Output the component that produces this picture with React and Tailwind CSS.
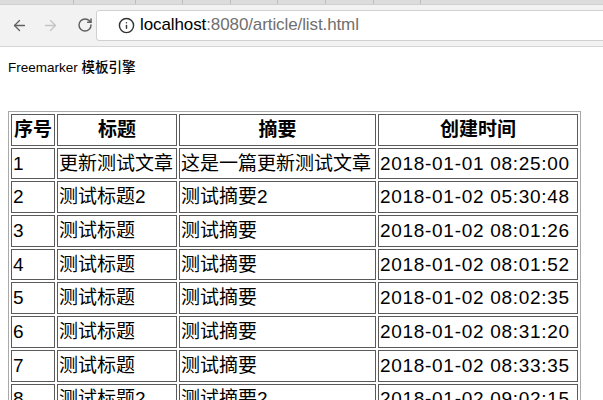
import React from 'react'
import { ArrowLeft, ArrowRight, RotateCw, Info } from 'lucide-react'

const rows = [
  ['1', '更新测试文章', '这是一篇更新测试文章', '2018-01-01 08:25:00'],
  ['2', '测试标题2', '测试摘要2', '2018-01-02 05:30:48'],
  ['3', '测试标题', '测试摘要', '2018-01-02 08:01:26'],
  ['4', '测试标题', '测试摘要', '2018-01-02 08:01:52'],
  ['5', '测试标题', '测试摘要', '2018-01-02 08:02:35'],
  ['6', '测试标题', '测试摘要', '2018-01-02 08:31:20'],
  ['7', '测试标题', '测试摘要', '2018-01-02 08:33:35'],
  ['8', '测试标题2', '测试摘要2', '2018-01-02 09:02:15'],
]

const font = { fontFamily: '"Liberation Sans", "Noto Sans CJK SC", sans-serif' }

function Toolbar() {
  return (
    <div className="h-[47px] bg-[#f2f2f2] border-b border-[#d6d6d6] relative">
      <div className="h-[5px] bg-[#dcdcdc] border-b border-[#cfcfcf] flex">
        <div className="w-[73px]" />
        {[62, 47, 48, 47, 48, 48, 47, 48].map((w, i) => (
          <div key={i} className="border-l border-[#bdbdbd]" style={{ width: w }} />
        ))}
      </div>
      <div className="flex items-center h-[38px] pt-[2px]">
        <ArrowLeft className="ml-[11px] w-[17px] h-[17px] text-[#5f5f5f]" strokeWidth={1.8} />
        <ArrowRight className="ml-[14px] w-[17px] h-[17px] text-[#c4c4c4]" strokeWidth={1.8} />
        <RotateCw className="ml-[18px] w-[16px] h-[16px] text-[#5f5f5f]" strokeWidth={2.2} />
        <div className="ml-[3px] flex-1 mr-[-10px] h-[31px] bg-white border border-[#d0d0d0] rounded-[3px] flex items-center">
          <Info className="ml-[21px] w-[17px] h-[17px] text-[#333]" strokeWidth={2} />
          <span className="ml-[5px] text-[17px] tracking-[-0.1px]" style={font}>
            <span className="text-black">localhost</span>
            <span className="text-[#6f6f6f]">:8080/article/list.html</span>
          </span>
        </div>
      </div>
    </div>
  )
}

export default function App() {
  return (
    <div className="w-[603px] h-[400px] overflow-hidden bg-white text-black" style={font}>
      <Toolbar />
      <div className="px-[8px]">
        <div className="mt-[12px] text-[13.5px] leading-[18px] font-medium">Freemarker 模板引擎</div>
        <table
          className="mt-[34px] border border-[#a9a9a9] text-[19px] table-fixed"
          style={{ borderCollapse: 'separate', borderSpacing: 2, width: 572 }}
        >
          <colgroup>
            <col style={{ width: 44 }} />
            <col style={{ width: 120 }} />
            <col style={{ width: 197 }} />
            <col style={{ width: 200 }} />
          </colgroup>
          <thead>
            <tr>
              {['序号', '标题', '摘要', '创建时间'].map((h) => (
                <th key={h} className="border border-[#5a5a5a] h-[31.7px] p-0 font-bold text-center leading-[22px]">
                  {h}
                </th>
              ))}
            </tr>
          </thead>
          <tbody>
            {rows.map((r) => (
              <tr key={r[0]}>
                {r.map((c, i) => (
                  <td
                    key={i}
                    className={
                      'border border-[#5a5a5a] h-[31.7px] px-[1px] py-0 leading-[22px] whitespace-nowrap overflow-hidden' +
                      (i === 3 ? ' tracking-[0.7px]' : '')
                    }
                  >
                    {c}
                  </td>
                ))}
              </tr>
            ))}
          </tbody>
        </table>
      </div>
    </div>
  )
}
